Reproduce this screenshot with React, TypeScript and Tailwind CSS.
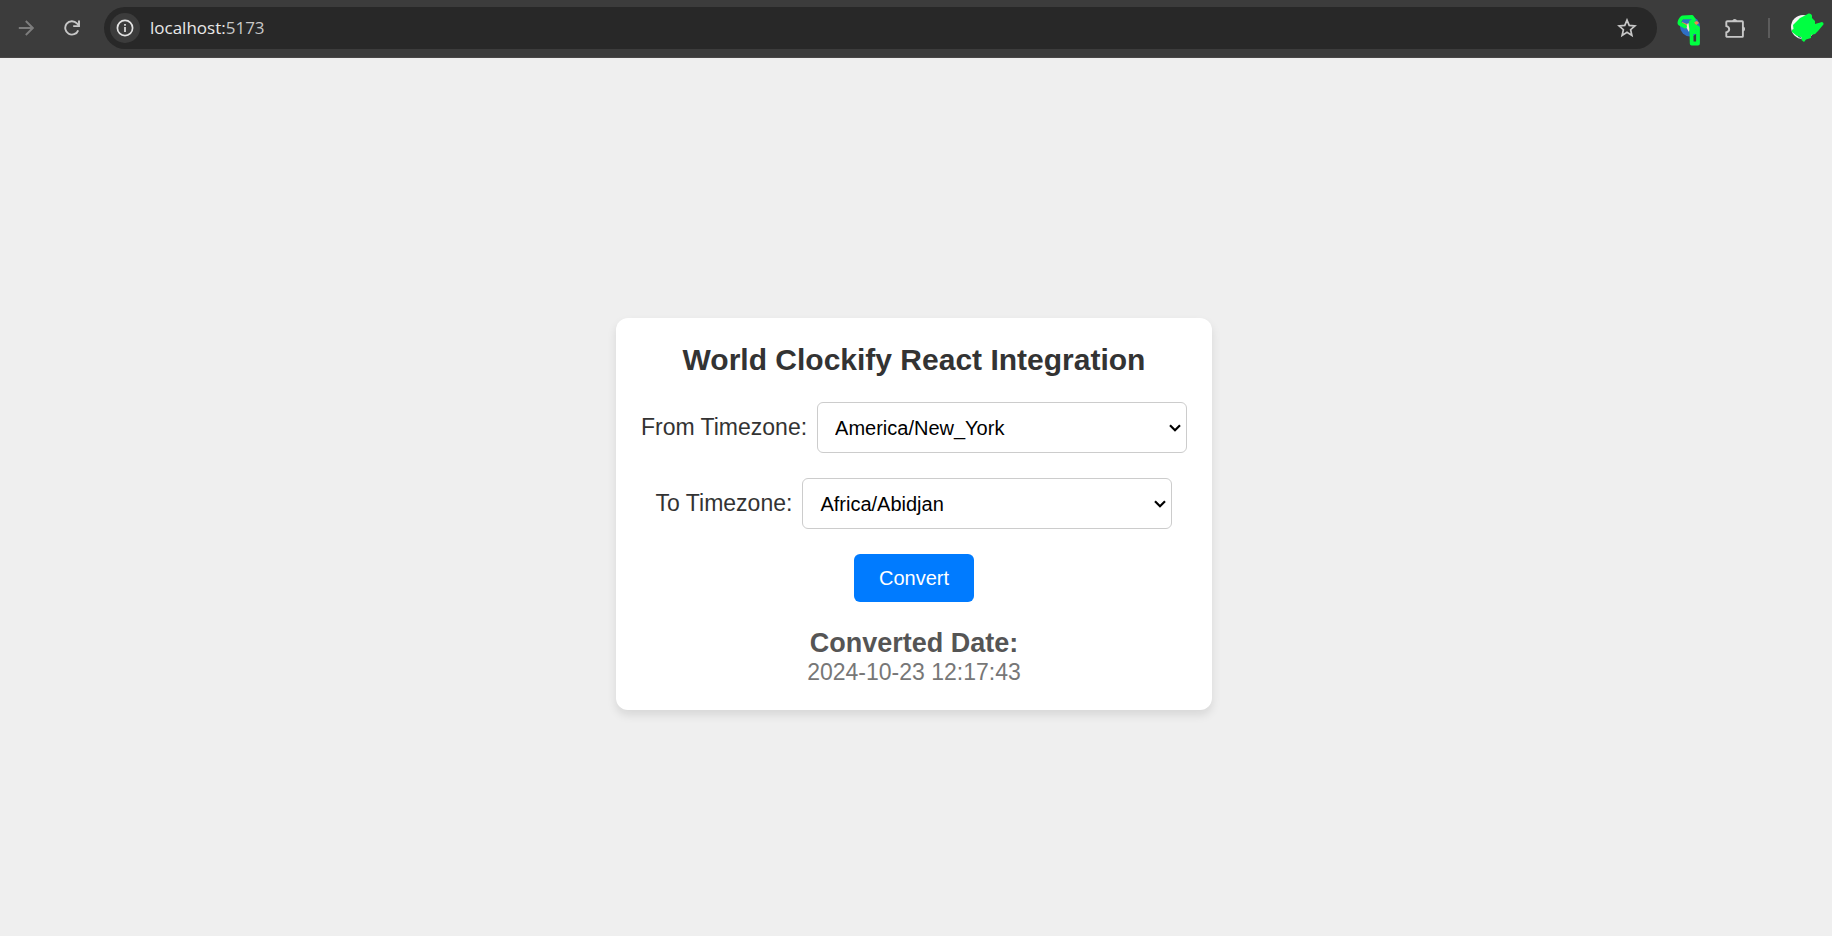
import { useState } from "react";

const ZONES = ["Africa/Abidjan", "America/New_York", "Asia/Tokyo", "Europe/London"];

function ForwardIcon() {
  return (
    <svg className="size-4" viewBox="0 0 16 16" fill="none" stroke="currentColor" strokeWidth="1.9" aria-hidden="true">
      <path d="M0.8 8H14M7.800 1L14.800 8L7.800 15" />
    </svg>
  );
}

function ReloadIcon() {
  return (
    <svg className="size-4" viewBox="0 0 16 16" fill="none" stroke="currentColor" strokeWidth="1.9" aria-hidden="true">
      <path d="M14.2 10.3A6.7 6.7 0 1 1 12.9 3.4L14.6 5.2" />
      <path d="M15 0.6V6.1H9.2" />
    </svg>
  );
}

function InfoIcon() {
  return (
    <svg className="size-[18px]" viewBox="0 0 18 18" fill="none" stroke="currentColor" aria-hidden="true">
      <circle cx="9" cy="9" r="7.6" strokeWidth="1.7" />
      <path d="M9 8V13M9 5V6.8" strokeWidth="1.7" />
    </svg>
  );
}

function StarIcon() {
  return (
    <svg className="size-[20px]" viewBox="0 0 20 20" fill="none" stroke="currentColor" strokeWidth="1.7" aria-hidden="true">
      <path d="M10 2.1L12.2 7.4L17.9 7.9L13.600 11.7L14.9 17.4L10 14.3L5.1 17.4L6.4 11.7L2.1 7.9L7.8 7.4Z" />
    </svg>
  );
}

function PuzzleIcon() {
  return (
    <svg className="h-[21px] w-[21px]" viewBox="0 0 21 21" fill="none" aria-hidden="true">
      <path
        d="M2.4 3.2H17.2Q17.9 3.2 17.9 3.9V18.2Q17.9 18.9 17.2 18.9H2.4Q1.3 18.9 1.3 18.2V14.3Q4.2 13.6 4.2 11.2Q4.2 8.8 1.3 8.1V3.9Q1.3 3.2 2.4 3.2Z"
        stroke="currentColor"
        strokeWidth="1.9"
      />
      <path d="M7.2 3A2.6 2.6 0 0 1 12.2 3ZM18 8.4A2.6 2.6 0 0 1 18 13.5Z" fill="currentColor" />
    </svg>
  );
}

function ExtensionIcon() {
  return (
    <svg className="h-[36px] w-[24px]" viewBox="0 -4 24 36" fill="none" aria-hidden="true">
      <circle cx="13" cy="12.5" r="10" fill="#2f6fc4" />
      <path d="M5 8L10 10L20 7L22 9L14 15L5 11Z" fill="#f08a4b" />
      <path d="M11 9L14 12L12 18L9 13Z" fill="#f3e3da" />
      <path
        d="M8 12.5L2.5 9.5Q2 7 5.5 3.3L15 3L17 6L13.5 10L14.5 17L14.7 29.5H21V14L17.5 12L14 8"
        stroke="#00ff41"
        strokeWidth="3.8"
        strokeLinejoin="round"
        strokeLinecap="round"
      />
      <path d="M13 8L18 12L20 20H14Z" fill="#00ff41" />
    </svg>
  );
}

function AvatarIcon() {
  return (
    <svg className="h-[32px] w-[34px]" viewBox="0 0 34 32" fill="none" aria-hidden="true">
      <circle cx="13" cy="15" r="12" fill="#f4f4f4" />
      <path d="M8 22L12 26.5L8 25Z" fill="#3b5a7a" />
      <path
        d="M3 13L10 6L15 3.5L18.5 1.5Q21 1 22 3.5V6L25 9V12L32 10Q34.500 11 33 13L28 19L25 22L21 23V26L16 27.5L14 30L11.500 28V25L7 24L2 20Q1 18 3.500 17Z"
        fill="#00ff41"
      />
    </svg>
  );
}

function BrowserBar() {
  return (
    <header className="flex h-[58px] items-center border-b border-[#494747] bg-[#3c3c3c] pr-2 pb-px pl-[18px] text-[#c7c7c7]">
      <button type="button" aria-label="Forward" className="text-[#7d7d7d]">
        <ForwardIcon />
      </button>
      <button type="button" aria-label="Reload" className="ml-[30px]">
        <ReloadIcon />
      </button>
      <div className="ml-6 flex h-[42px] min-w-0 flex-1 items-center rounded-full bg-[#282828] pr-5 pl-1.5">
        <button
          type="button"
          aria-label="Site information"
          className="flex size-[30px] items-center justify-center rounded-full bg-[#3c3c3c] text-[#e3e3e3]"
        >
          <InfoIcon />
        </button>
        <a
          href="http://localhost:5173"
          className="ml-2.5 flex-1 font-['Open_Sans','Noto_Sans',sans-serif] text-[17px] leading-6 text-[#c7c7c7]"
        >
          <span className="text-[#e8e8e8]">localhost:</span>5173
        </a>
        <button type="button" aria-label="Bookmark this tab">
          <StarIcon />
        </button>
      </div>
      <button type="button" aria-label="Extension" className="ml-5">
        <ExtensionIcon />
      </button>
      <button type="button" aria-label="Extensions" className="ml-6">
        <PuzzleIcon />
      </button>
      <span className="ml-[22px] h-5 w-0.5 bg-[#5c5c5c]" />
      <button type="button" aria-label="Profile" className="ml-5">
        <AvatarIcon />
      </button>
    </header>
  );
}

type ZoneFieldProps = {
  id: string;
  label: string;
  value: string;
  onChange: (zone: string) => void;
};

function ZoneField({ id, label, value, onChange }: ZoneFieldProps) {
  return (
    <div className="flex items-center gap-2.5">
      <label htmlFor={id} className="text-[23px] leading-[27px] text-[#333]">
        {label}
      </label>
      <div className="relative">
        <select
          id={id}
          value={value}
          onChange={(event) => onChange(event.target.value)}
          className="h-[51px] w-[370px] appearance-none rounded-md border border-[#ccc] bg-white pr-8 pl-[17px] text-xl text-black"
        >
          {ZONES.map((zone) => (
            <option key={zone}>{zone}</option>
          ))}
        </select>
        <svg
          className="pointer-events-none absolute top-[22px] right-[6px] h-2 w-3"
          viewBox="0 0 12 8"
          fill="none"
          stroke="#000"
          strokeWidth="2.2"
          aria-hidden="true"
        >
          <path d="M1 1.200L6 6.200L11 1.200" />
        </svg>
      </div>
    </div>
  );
}

export default function App() {
  const [from, setFrom] = useState("America/New_York");
  const [to, setTo] = useState("Africa/Abidjan");

  return (
    <div className="flex min-h-screen flex-col bg-[#efefef] font-['Liberation_Sans',Arial,sans-serif]">
      <BrowserBar />
      <main className="flex flex-1 items-center justify-center pt-[34px] pr-1">
        <section className="flex flex-col items-center gap-[25px] rounded-xl bg-white p-[25px] shadow-[0_5px_10px_rgba(0,0,0,0.1)]">
          <h1 className="text-3xl leading-[34px] font-bold text-[#333]">World Clockify React Integration</h1>
          <ZoneField id="from-zone" label="From Timezone:" value={from} onChange={setFrom} />
          <ZoneField id="to-zone" label="To Timezone:" value={to} onChange={setTo} />
          <button type="button" className="h-12 rounded-md bg-[#007bff] px-[25px] text-xl text-white">
            Convert
          </button>
          <div className="text-center">
            <h2 className="text-[27px] leading-8 font-bold text-[#555]">Converted Date:</h2>
            <p className="text-[23px] leading-[26px] text-[#777]">2024-10-23 12:17:43</p>
          </div>
        </section>
      </main>
    </div>
  );
}
